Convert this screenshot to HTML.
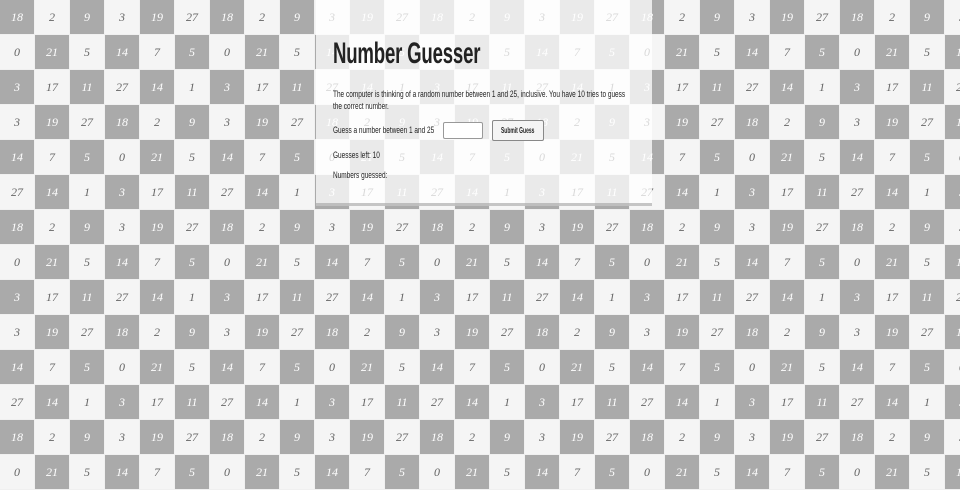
<!DOCTYPE html>
<html><head><meta charset="utf-8"><style>
body{margin:0;width:960px;height:469px;overflow:hidden;background:#f5f5f5;position:relative}
.g{position:absolute;left:0;top:0}
.r{display:flex;height:35px}
.r i{flex:0 0 35px;width:35px;height:35px;box-sizing:border-box;border:1px solid #f0f0f0;border-width:0 1px 1px 0;background:#f5f5f5;color:#666;font:italic 12px/35px "Liberation Serif",serif;text-align:center}
.r:nth-child(odd) i:nth-child(odd),.r:nth-child(even) i:nth-child(even){background:#aaa;color:#fff}
.p{position:absolute;left:316px;top:0;width:336px;height:203px;background:rgba(255,255,255,.75);border-bottom:3px solid rgba(160,160,160,.6);font-family:"Liberation Sans",sans-serif;color:#222}
h1{position:absolute;left:17px;top:36px;margin:0;font:bold 30px/36px "Liberation Sans",sans-serif;white-space:nowrap;transform:scaleX(0.62);transform-origin:0 0;letter-spacing:-0.3px}
.t{position:absolute;left:17px;font-size:9px;line-height:12px;white-space:nowrap;transform:scaleX(0.72);transform-origin:0 0}
.in{position:absolute;left:127px;top:122px;width:38px;height:15px;border:1px solid #999;border-radius:2px;background:#fff}
.b{position:absolute;left:176px;top:120px;width:50px;height:19px;border:1px solid #888;border-radius:2px;background:#f4f4f4}
.b span{position:absolute;left:8px;top:0;font:bold 8px/19px "Liberation Sans",sans-serif;white-space:nowrap;transform:scaleX(0.62);transform-origin:0 0}
</style></head><body>
<div class="g">
<div class="r"><i>18</i><i>2</i><i>9</i><i>3</i><i>19</i><i>27</i><i>18</i><i>2</i><i>9</i><i>3</i><i>19</i><i>27</i><i>18</i><i>2</i><i>9</i><i>3</i><i>19</i><i>27</i><i>18</i><i>2</i><i>9</i><i>3</i><i>19</i><i>27</i><i>18</i><i>2</i><i>9</i><i>3</i></div>
<div class="r"><i>0</i><i>21</i><i>5</i><i>14</i><i>7</i><i>5</i><i>0</i><i>21</i><i>5</i><i>14</i><i>7</i><i>5</i><i>0</i><i>21</i><i>5</i><i>14</i><i>7</i><i>5</i><i>0</i><i>21</i><i>5</i><i>14</i><i>7</i><i>5</i><i>0</i><i>21</i><i>5</i><i>14</i></div>
<div class="r"><i>3</i><i>17</i><i>11</i><i>27</i><i>14</i><i>1</i><i>3</i><i>17</i><i>11</i><i>27</i><i>14</i><i>1</i><i>3</i><i>17</i><i>11</i><i>27</i><i>14</i><i>1</i><i>3</i><i>17</i><i>11</i><i>27</i><i>14</i><i>1</i><i>3</i><i>17</i><i>11</i><i>27</i></div>
<div class="r"><i>3</i><i>19</i><i>27</i><i>18</i><i>2</i><i>9</i><i>3</i><i>19</i><i>27</i><i>18</i><i>2</i><i>9</i><i>3</i><i>19</i><i>27</i><i>18</i><i>2</i><i>9</i><i>3</i><i>19</i><i>27</i><i>18</i><i>2</i><i>9</i><i>3</i><i>19</i><i>27</i><i>18</i></div>
<div class="r"><i>14</i><i>7</i><i>5</i><i>0</i><i>21</i><i>5</i><i>14</i><i>7</i><i>5</i><i>0</i><i>21</i><i>5</i><i>14</i><i>7</i><i>5</i><i>0</i><i>21</i><i>5</i><i>14</i><i>7</i><i>5</i><i>0</i><i>21</i><i>5</i><i>14</i><i>7</i><i>5</i><i>0</i></div>
<div class="r"><i>27</i><i>14</i><i>1</i><i>3</i><i>17</i><i>11</i><i>27</i><i>14</i><i>1</i><i>3</i><i>17</i><i>11</i><i>27</i><i>14</i><i>1</i><i>3</i><i>17</i><i>11</i><i>27</i><i>14</i><i>1</i><i>3</i><i>17</i><i>11</i><i>27</i><i>14</i><i>1</i><i>3</i></div>
<div class="r"><i>18</i><i>2</i><i>9</i><i>3</i><i>19</i><i>27</i><i>18</i><i>2</i><i>9</i><i>3</i><i>19</i><i>27</i><i>18</i><i>2</i><i>9</i><i>3</i><i>19</i><i>27</i><i>18</i><i>2</i><i>9</i><i>3</i><i>19</i><i>27</i><i>18</i><i>2</i><i>9</i><i>3</i></div>
<div class="r"><i>0</i><i>21</i><i>5</i><i>14</i><i>7</i><i>5</i><i>0</i><i>21</i><i>5</i><i>14</i><i>7</i><i>5</i><i>0</i><i>21</i><i>5</i><i>14</i><i>7</i><i>5</i><i>0</i><i>21</i><i>5</i><i>14</i><i>7</i><i>5</i><i>0</i><i>21</i><i>5</i><i>14</i></div>
<div class="r"><i>3</i><i>17</i><i>11</i><i>27</i><i>14</i><i>1</i><i>3</i><i>17</i><i>11</i><i>27</i><i>14</i><i>1</i><i>3</i><i>17</i><i>11</i><i>27</i><i>14</i><i>1</i><i>3</i><i>17</i><i>11</i><i>27</i><i>14</i><i>1</i><i>3</i><i>17</i><i>11</i><i>27</i></div>
<div class="r"><i>3</i><i>19</i><i>27</i><i>18</i><i>2</i><i>9</i><i>3</i><i>19</i><i>27</i><i>18</i><i>2</i><i>9</i><i>3</i><i>19</i><i>27</i><i>18</i><i>2</i><i>9</i><i>3</i><i>19</i><i>27</i><i>18</i><i>2</i><i>9</i><i>3</i><i>19</i><i>27</i><i>18</i></div>
<div class="r"><i>14</i><i>7</i><i>5</i><i>0</i><i>21</i><i>5</i><i>14</i><i>7</i><i>5</i><i>0</i><i>21</i><i>5</i><i>14</i><i>7</i><i>5</i><i>0</i><i>21</i><i>5</i><i>14</i><i>7</i><i>5</i><i>0</i><i>21</i><i>5</i><i>14</i><i>7</i><i>5</i><i>0</i></div>
<div class="r"><i>27</i><i>14</i><i>1</i><i>3</i><i>17</i><i>11</i><i>27</i><i>14</i><i>1</i><i>3</i><i>17</i><i>11</i><i>27</i><i>14</i><i>1</i><i>3</i><i>17</i><i>11</i><i>27</i><i>14</i><i>1</i><i>3</i><i>17</i><i>11</i><i>27</i><i>14</i><i>1</i><i>3</i></div>
<div class="r"><i>18</i><i>2</i><i>9</i><i>3</i><i>19</i><i>27</i><i>18</i><i>2</i><i>9</i><i>3</i><i>19</i><i>27</i><i>18</i><i>2</i><i>9</i><i>3</i><i>19</i><i>27</i><i>18</i><i>2</i><i>9</i><i>3</i><i>19</i><i>27</i><i>18</i><i>2</i><i>9</i><i>3</i></div>
<div class="r"><i>0</i><i>21</i><i>5</i><i>14</i><i>7</i><i>5</i><i>0</i><i>21</i><i>5</i><i>14</i><i>7</i><i>5</i><i>0</i><i>21</i><i>5</i><i>14</i><i>7</i><i>5</i><i>0</i><i>21</i><i>5</i><i>14</i><i>7</i><i>5</i><i>0</i><i>21</i><i>5</i><i>14</i></div>
</div>
<div class="p">
<h1>Number Guesser</h1>
<div class="t" style="top:88px">The computer is thinking of a random number between 1 and 25, inclusive. You have 10 tries to guess</div>
<div class="t" style="top:100px">the correct number.</div>
<div class="t" style="top:124px">Guess a number between 1 and 25</div>
<div class="in"></div>
<div class="b"><span>Submit Guess</span></div>
<div class="t" style="top:149px">Guesses left: 10</div>
<div class="t" style="top:169px">Numbers guessed:</div>
</div>
</body></html>
